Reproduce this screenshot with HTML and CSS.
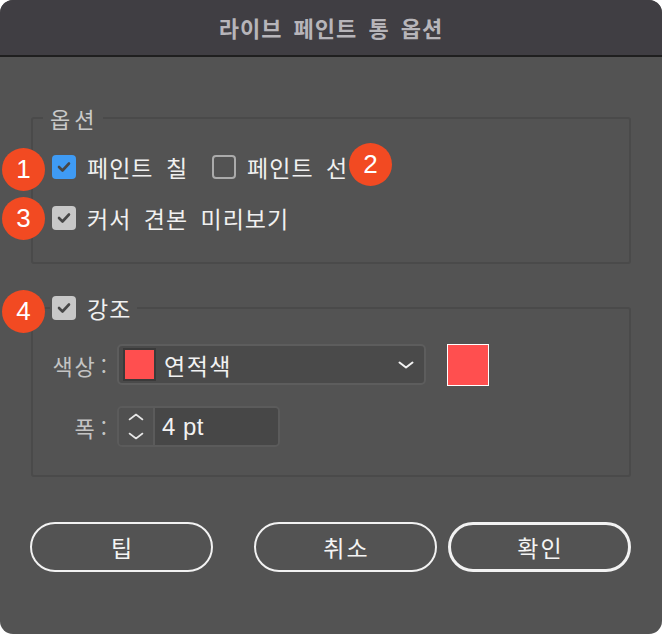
FILE: index.html
```html
<!DOCTYPE html>
<html lang="ko">
<head>
<meta charset="utf-8">
<title>라이브 페인트 통 옵션</title>
<link rel="stylesheet" href="styles.css">
</head>
<body>
<div class="window">
  <header class="titlebar"><h1 class="title">라이브 페인트 통 옵션</h1></header>
  <main class="content">
    <fieldset class="group group-options">
      <legend class="legend-text">옵션</legend>
      <div class="row">
        <label class="check">
          <span class="box box-blue"><svg viewBox="0 0 24 24" width="24" height="24"><polyline points="7,12 10.5,15.5 17,8.5" fill="none" stroke="#474747" stroke-width="2.6" stroke-linecap="round" stroke-linejoin="round"/></svg></span>
          <span class="check-label">페인트 칠</span>
        </label>
        <label class="check check-second">
          <span class="box box-empty"></span>
          <span class="check-label">페인트 선</span>
        </label>
      </div>
      <div class="row">
        <label class="check">
          <span class="box box-gray"><svg viewBox="0 0 24 24" width="24" height="24"><polyline points="7,12 10.5,15.5 17,8.5" fill="none" stroke="#474747" stroke-width="2.6" stroke-linecap="round" stroke-linejoin="round"/></svg></span>
          <span class="check-label">커서 견본 미리보기</span>
        </label>
      </div>
    </fieldset>

    <fieldset class="group group-stroke">
      <legend class="legend-check">
        <label class="check">
          <span class="box box-gray"><svg viewBox="0 0 24 24" width="24" height="24"><polyline points="7,12 10.5,15.5 17,8.5" fill="none" stroke="#474747" stroke-width="2.6" stroke-linecap="round" stroke-linejoin="round"/></svg></span>
          <span class="check-label">강조</span>
        </label>
      </legend>
      <div class="field-row">
        <span class="field-label">색상<span class="colon">:</span></span>
        <div class="select">
          <span class="swatch-small"></span>
          <span class="select-text">연적색</span>
          <svg class="chevron" viewBox="0 0 16 8" width="16" height="8"><polyline points="1.5,1.5 8,6.5 14.5,1.5" fill="none" stroke="#f2f2f2" stroke-width="2" stroke-linecap="round" stroke-linejoin="round"/></svg>
        </div>
        <span class="swatch-big"></span>
      </div>
      <div class="field-row">
        <span class="field-label">폭<span class="colon">:</span></span>
        <div class="spinner">
          <div class="stepper">
            <svg viewBox="0 0 16 8" width="16" height="8"><polyline points="1.5,6.5 8,1.5 14.5,6.5" fill="none" stroke="#e6e6e6" stroke-width="1.6" stroke-linecap="round" stroke-linejoin="round"/></svg>
            <svg viewBox="0 0 16 8" width="16" height="8"><polyline points="1.5,1.5 8,6.5 14.5,1.5" fill="none" stroke="#e6e6e6" stroke-width="1.6" stroke-linecap="round" stroke-linejoin="round"/></svg>
          </div>
          <span class="spinner-value">4 pt</span>
        </div>
      </div>
    </fieldset>

    <div class="buttons">
      <button class="btn" type="button">팁</button>
      <div class="btn-pair">
        <button class="btn" type="button">취소</button>
        <button class="btn btn-default" type="button">확인</button>
      </div>
    </div>

    <span class="badge badge-1">1</span>
    <span class="badge badge-2">2</span>
    <span class="badge badge-3">3</span>
    <span class="badge badge-4">4</span>
  </main>
</div>
</body>
</html>
```

FILE: styles.css
```css
* { box-sizing: border-box; }

html, body {
  margin: 0;
  padding: 0;
  background: #ffffff;
}

body {
  font-family: "Noto Sans CJK KR", "Noto Sans", sans-serif;
  color: #f0f0f0;
}

.window {
  width: 662px;
  height: 634px;
  background: #535353;
  border-radius: 13px;
  overflow: hidden;
  display: flex;
  flex-direction: column;
}

.titlebar {
  height: 57px;
  flex: none;
  background: #403e43;
  border-bottom: 2px solid #1f1f1f;
  display: flex;
  align-items: center;
  justify-content: center;
}

.title {
  margin: 0;
  font-size: 22px;
  font-weight: 700;
  letter-spacing: 1px;
  word-spacing: 4px;
  color: #b7b5ba;
  line-height: 1;
  padding-bottom: 2px;
}

.content {
  position: relative;
  flex: 1;
  padding: 49px 31px 0 31px;
}

.group {
  margin: 0;
  border: 2px solid #4a4a4a;
  border-radius: 3px;
  min-width: 0;
}

.group-options {
  padding: 22px 0 29px 0;
}

.legend-text {
  margin-left: 10px;
  padding: 0 5px 0 7px;
  font-size: 22px;
  line-height: 24px;
  letter-spacing: 4px;
  color: #c9c9c9;
}

.row {
  display: flex;
  align-items: center;
  height: 30px;
  padding-left: 19px;
}

.row + .row {
  margin-top: 21px;
}

.check {
  display: inline-flex;
  align-items: center;
  gap: 11px;
  font-size: 23px;
  letter-spacing: 1px;
  word-spacing: 5px;
  color: #f0f0f0;
}

.check-second {
  margin-left: 24px;
}

.box {
  width: 24px;
  height: 24px;
  border-radius: 4px;
  flex: none;
  display: block;
}

.box svg { display: block; }

.box-blue { background: #3f9bf4; }
.box-gray { background: #c8c8c8; }
.box-empty { border: 2px solid #ababab; }

.group-stroke {
  margin-top: 29px;
  padding: 21px 0 28px 0;
}

.legend-check {
  margin-left: 17px;
  padding: 0 6px 0 2px;
  height: 30px;
  display: flex;
  align-items: center;
}

.field-row {
  display: flex;
  align-items: center;
  height: 41px;
  padding-left: 13px;
}

.field-row + .field-row {
  margin-top: 21px;
}

.field-label {
  width: 61px;
  text-align: right;
  font-size: 22px;
  letter-spacing: 2px;
  color: #c4c4c4;
  margin-right: 10px;
}

.colon {
  margin-left: 4px;
  letter-spacing: 0;
}

.select {
  width: 309px;
  height: 41px;
  background: #4a4a4a;
  border: 2px solid #5d5d5d;
  border-radius: 5px;
  display: flex;
  align-items: center;
  padding: 0 10px 0 4px;
}

.swatch-small {
  width: 33px;
  height: 33px;
  background: #ff4f4f;
  border: 2px solid #3a3a3a;
  flex: none;
}

.select-text {
  margin-left: 8px;
  font-size: 23px;
  letter-spacing: 1.5px;
  color: #f2f2f2;
  flex: 1;
}

.chevron { display: block; }

.swatch-big {
  margin-left: 21px;
  width: 42px;
  height: 42px;
  background: #ff4f4f;
  border: 1px solid #ffffff;
}

.spinner {
  width: 163px;
  height: 41px;
  border: 2px solid #5b5b5b;
  border-radius: 5px;
  display: flex;
  overflow: hidden;
}

.stepper {
  width: 36px;
  border-right: 2px solid #5b5b5b;
  background: #505050;
  display: flex;
  flex-direction: column;
  align-items: center;
  justify-content: center;
  gap: 11px;
}

.stepper svg { display: block; }

.spinner-value {
  flex: 1;
  background: #474747;
  display: flex;
  align-items: center;
  padding-left: 7px;
  font-family: "Liberation Sans", Arial, sans-serif;
  font-size: 24px;
  letter-spacing: 0.5px;
  color: #f2f2f2;
}

.buttons {
  margin-top: 45px;
  display: flex;
  justify-content: space-between;
  margin-left: -1px;
}

.btn-pair {
  display: flex;
  gap: 11px;
}

.btn {
  width: 183px;
  height: 50px;
  border-radius: 25px;
  border: 2px solid #f2f2f2;
  background: transparent;
  color: #f4f4f4;
  font-family: "Noto Sans CJK KR", sans-serif;
  font-size: 23px;
  letter-spacing: 2px;
  padding: 0 0 0 2px;
}

.btn-default {
  border-width: 3.5px;
}

.badge {
  position: absolute;
  width: 43px;
  height: 43px;
  border-radius: 50%;
  background: #f24a22;
  color: #ffffff;
  font-family: "Liberation Sans", Arial, sans-serif;
  font-size: 26px;
  display: flex;
  align-items: center;
  justify-content: center;
}

.badge-1 { left: 2px; top: 91px; }
.badge-2 { left: 349px; top: 86px; }
.badge-3 { left: 2px; top: 140px; }
.badge-4 { left: 2px; top: 233px; }
```
